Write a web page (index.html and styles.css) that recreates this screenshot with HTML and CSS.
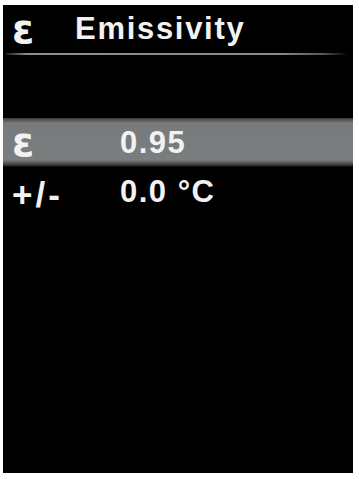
FILE: index.html
```html
<!DOCTYPE html>
<html lang="en">
<head>
  <meta charset="UTF-8" />
  <title>Emissivity</title>
  <link rel="stylesheet" href="styles.css">
</head>
<body>

<div class="screen">
  <!-- title -->
  <div class="title">
    <span class="label"><span class="sym">ε</span></span><span class="title-text">Emissivity</span>
  </div>
  <div class="rule"></div>

  <!-- settings -->
  <ul class="menu">
    <li class="item selected">
      <span class="label"><span class="sym">ε</span></span><span class="value">0.95</span>
    </li>
    <li class="item">
      <span class="label"><span class="offset">+/-</span></span><span class="value">0.0 °C</span>
    </li>
  </ul>
</div>

</body>
</html>
```

FILE: styles.css
```css
body {
  margin: 0;
  background: #fff;
}

.screen {
  width: 350px;
  height: 468px;
  margin: 5px 0 0 3px;
  background: #000;
  color: #f2f2f2;
  font-family: "Liberation Sans", Arial, sans-serif;
  font-weight: bold;
  font-size: 31px;
  overflow: hidden;
}

.title {
  height: 48px;
  line-height: 48px;
  padding-left: 9px;
  white-space: nowrap;
}

.title .label {
  display: inline-block;
  width: 63px;
}

.title-text {
  letter-spacing: 1.7px;
}

.sym {
  font-family: "DejaVu Sans", sans-serif;
  font-size: 40px;
  line-height: 1;
  vertical-align: -3px;
}

.title .sym {
  vertical-align: -4px;
}

.rule {
  height: 2px;
  margin: 0 5px 0 3px;
  background: linear-gradient(to right, #1a1a1a, #8e8e8e 6%, #8a8a8a 80%, #555 93%, #000);
}

.menu {
  list-style: none;
  margin: 63px 0 0;
  padding: 0;
}

.item {
  height: 49px;
  line-height: 49px;
  padding-left: 9px;
  white-space: nowrap;
}

.item .label {
  display: inline-block;
  width: 108px;
}

.offset {
  font-size: 35px;
  line-height: 1;
  letter-spacing: 3px;
  vertical-align: -5px;
}

.value {
  letter-spacing: 1.5px;
}

.selected {
  background: linear-gradient(to bottom, #3c3e3e 0, #787b7b 5px, #7b7e7e 42px, #3a3c3c 47px, #000 49px);
}
```
